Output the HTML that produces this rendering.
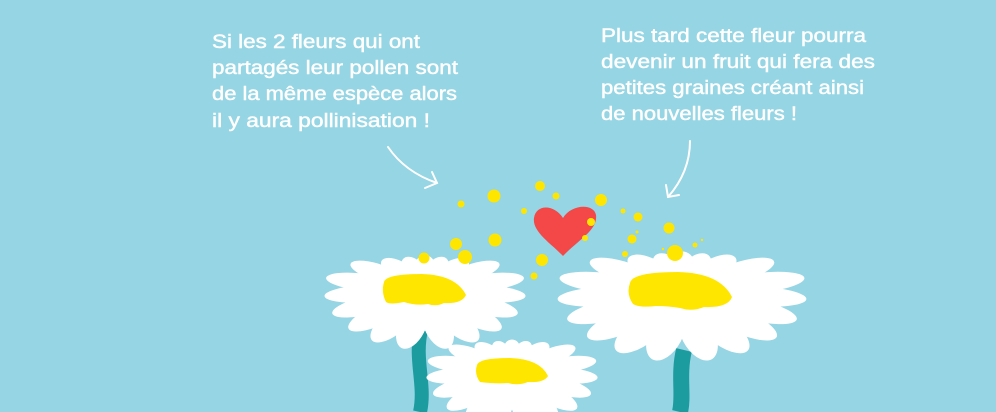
<!DOCTYPE html>
<html><head><meta charset="utf-8"><style>
html,body{margin:0;padding:0;width:996px;height:412px;overflow:hidden;background:#95d5e4}
svg{display:block}
text{font-family:"Liberation Sans",sans-serif;font-size:19.5px;fill:#fff;stroke:#fff;stroke-width:0.45}
</style></head><body>
<svg width="996" height="412" viewBox="0 0 996 412" xmlns="http://www.w3.org/2000/svg">
<defs>
<g id="fl" fill="#fff">
<ellipse cx="0" cy="4" rx="52" ry="34"/>
<!-- upper short petals -->
<ellipse cx="0" cy="-40" rx="10" ry="18" transform="rotate(0)"/>
<ellipse cx="0" cy="-40" rx="10" ry="18" transform="rotate(-18)"/>
<ellipse cx="0" cy="-40" rx="10" ry="18" transform="rotate(18)"/>
<ellipse cx="0" cy="-44" rx="12" ry="22" transform="rotate(-38)"/>
<ellipse cx="0" cy="-44" rx="12" ry="22" transform="rotate(38)"/>
<ellipse cx="0" cy="-56" rx="13" ry="30" transform="rotate(-58)"/>
<ellipse cx="0" cy="-56" rx="13" ry="30" transform="rotate(58)"/>
<!-- side petals -->
<ellipse cx="0" cy="-64" rx="14" ry="36" transform="rotate(-78)"/>
<ellipse cx="0" cy="-64" rx="14" ry="36" transform="rotate(78)"/>
<ellipse cx="0" cy="-64" rx="14" ry="36" transform="rotate(-96)"/>
<ellipse cx="0" cy="-64" rx="14" ry="36" transform="rotate(96)"/>
<!-- lower petals -->
<ellipse cx="0" cy="-62" rx="15" ry="38" transform="rotate(-114)"/>
<ellipse cx="0" cy="-62" rx="15" ry="38" transform="rotate(114)"/>
<ellipse cx="0" cy="-62" rx="15" ry="38" transform="rotate(-132)"/>
<ellipse cx="0" cy="-62" rx="15" ry="38" transform="rotate(132)"/>
<ellipse cx="0" cy="-62" rx="15" ry="38" transform="rotate(-150)"/>
<ellipse cx="0" cy="-62" rx="15" ry="38" transform="rotate(150)"/>
<ellipse cx="0" cy="-62" rx="14" ry="38" transform="rotate(-168)"/>
<ellipse cx="0" cy="-62" rx="14" ry="38" transform="rotate(168)"/>
</g>
</defs>

<!-- stems -->
<path d="M421 330 C414 360 426 385 420 412" stroke="#1d9ca0" stroke-width="14" fill="none"/>
<path d="M684 350 C678 375 684 395 680 412" stroke="#1d9ca0" stroke-width="16" fill="none"/>

<!-- flower 1 -->
<use href="#fl" transform="translate(425,290) scale(1.01,0.6)"/>
<path d="M384 282 Q386 274 422 274 Q456 275 466 295 Q462 304 444 303 Q436 307 428 304 Q416 306 404 302 Q390 305 386 302 Q381 292 384 282Z" fill="#ffe600"/>

<!-- flower 2 -->
<use href="#fl" transform="translate(682,292) scale(1.25,0.7)"/>
<path d="M630 283 Q632 272 678 272 Q720 273 732 297 Q728 308 704 307 Q692 312 680 308 Q668 306 656 306 Q640 308 633 304 Q626 294 630 283Z" fill="#ffe600"/>

<!-- flower 3 -->
<use href="#fl" transform="translate(512,372) scale(0.86,0.56)"/>
<path d="M477 365 Q479 358 510 358 Q540 359 548 376 Q544 383 528 382 Q518 386 508 383 Q496 384 480 382 Q474 374 477 365Z" fill="#ffe600"/>

<!-- heart -->
<path d="M563 256 C552 244 532 232 534 218 C536 204 554 204 563 218 C571 204 594 203 596 215 C598 230 578 240 563 256Z" fill="#f44747"/>

<!-- pollen -->
<g fill="#ffe600">
<circle cx="540" cy="186" r="5"/><circle cx="556" cy="196" r="3.5"/><circle cx="494" cy="196" r="6.5"/>
<circle cx="461" cy="204" r="3.5"/><circle cx="601" cy="200" r="6"/><circle cx="524" cy="211" r="3"/>
<circle cx="495" cy="240" r="6.5"/><circle cx="456" cy="244" r="6"/><circle cx="465" cy="257" r="7"/>
<circle cx="424" cy="258" r="5.5"/><circle cx="542" cy="260" r="6"/><circle cx="534" cy="276" r="3.5"/>
<circle cx="591" cy="222" r="4"/><circle cx="585" cy="238" r="3"/><circle cx="623" cy="211" r="2.5"/>
<circle cx="638" cy="217" r="4.5"/><circle cx="637" cy="232" r="1.5"/><circle cx="632" cy="239" r="4.5"/>
<circle cx="669" cy="228" r="5.5"/><circle cx="625" cy="254" r="3"/><circle cx="675" cy="253" r="8"/>
<circle cx="695" cy="245" r="2.5"/><circle cx="702" cy="240" r="1.2"/><circle cx="663" cy="249" r="1.2"/>
</g>

<!-- arrows -->
<g stroke="#fff" stroke-width="2" fill="none" stroke-linecap="round">
<path d="M388 147 Q405 172 437 183"/>
<path d="M432 172 L437 183 L425 188"/>
<path d="M690 141 Q690 172 668 197"/>
<path d="M666 185 L668 197 L679 195"/>
</g>

<!-- text -->
<text x="212" y="48" textLength="208" lengthAdjust="spacingAndGlyphs">Si les 2 fleurs qui ont</text>
<text x="212" y="74" textLength="246" lengthAdjust="spacingAndGlyphs">partagés leur pollen sont</text>
<text x="212" y="100" textLength="245" lengthAdjust="spacingAndGlyphs">de la même espèce alors</text>
<text x="212" y="127" textLength="218" lengthAdjust="spacingAndGlyphs">il y aura pollinisation !</text>

<text x="601" y="42" textLength="265" lengthAdjust="spacingAndGlyphs">Plus tard cette fleur pourra</text>
<text x="601" y="68" textLength="274" lengthAdjust="spacingAndGlyphs">devenir un fruit qui fera des</text>
<text x="601" y="94" textLength="263" lengthAdjust="spacingAndGlyphs">petites graines créant ainsi</text>
<text x="601" y="120" textLength="196" lengthAdjust="spacingAndGlyphs">de nouvelles fleurs !</text>
</svg>
</body></html>
